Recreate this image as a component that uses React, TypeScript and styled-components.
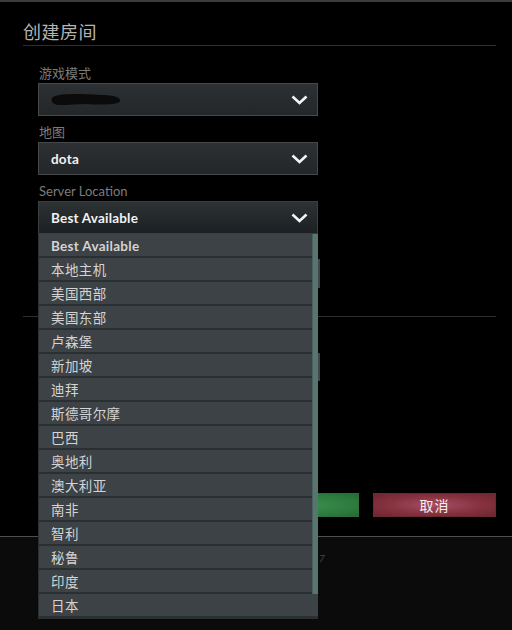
import React from "react";
import styled, { createGlobalStyle } from "styled-components";

const GlobalStyle = createGlobalStyle`
  html, body { margin: 0; padding: 0; background: #000; }
  body {
    font-family: Lato, "Noto Sans CJK SC", "Noto Sans", sans-serif;
    -webkit-font-smoothing: antialiased;
  }
  * { box-sizing: border-box; }
`;

const Page = styled.div`
  width: 512px;
  min-height: 630px;
  display: flex;
  flex-direction: column;
  background: #000;
  overflow: hidden;
`;

const TopBar = styled.div`
  height: 2px;
  background: #3c3c3c;
`;

const Panel = styled.div`
  padding: 18px 16px 19px 23px;
  display: flex;
  flex-direction: column;
`;

const Title = styled.h1`
  margin: 0;
  font-size: 18px;
  font-weight: 400;
  line-height: 25px;
  color: #b4b4b4;
  letter-spacing: 0.5px;
  border-bottom: 1px solid #2e2e2e;
`;

const Form = styled.div<{ $top: number }>`
  margin: ${(p) => p.$top}px 0 0 15px;
  width: 282px;
  display: flex;
  flex-direction: column;
`;

const Label = styled.div<{ $first?: boolean }>`
  margin-top: ${(p) => (p.$first ? 0 : 8)}px;
  height: 18px;
  line-height: 17px;
  font-size: 13px;
  color: #7c7c7c;
  padding-left: 1px;
`;

const SelectWrap = styled.div`
  position: relative;
  width: 280px;
`;

const SelectBox = styled.div<{ $open?: boolean }>`
  height: 33px;
  width: 280px;
  border: 1px solid ${(p) => (p.$open ? "#3a3f41" : "#45494b")};
  background: ${(p) =>
    p.$open
      ? "linear-gradient(#2d3234, #1c2022)"
      : "linear-gradient(#2c3032, #23272a)"};
  display: flex;
  align-items: center;
  justify-content: space-between;
  padding: 0 9px 0 12px;
  color: #f2f2f2;
  font-size: 13.5px;
  font-weight: 700;
  letter-spacing: 0.2px;
`;

const Chevron = () => (
  <svg width="17" height="10" viewBox="0 0 17 10">
    <polyline
      points="1.5,1.5 8.5,8 15.5,1.5"
      fill="none"
      stroke="#f4f4f4"
      strokeWidth="2.6"
      strokeLinejoin="miter"
    />
  </svg>
);

const Redaction = () => (
  <svg width="72" height="16" viewBox="0 0 72 16">
    <path
      d="M2 5 C 10 1, 30 2, 50 3 C 62 3, 70 5, 69 9 C 68 13, 50 13, 35 12 C 20 12, 6 15, 2 11 C 0 9, 0 7, 2 5 Z"
      fill="#0b0b0b"
    />
  </svg>
);

const Dropdown = styled.div`
  position: absolute;
  top: 100%;
  left: 0;
  width: 280px;
  z-index: 10;
  background: #3c4245;
  border-left: 1px solid #2b3033;
  border-bottom: 1px solid #2b3033;
  display: flex;
  flex-direction: column;
`;

const Option = styled.div<{ $latin?: boolean }>`
  height: 24px;
  line-height: 24px;
  padding-left: 12px;
  background: #3c4245;
  border-bottom: 2px solid #2a2f31;
  color: #d4d4d4;
  font-size: 13.5px;
  font-weight: ${(p) => (p.$latin ? 700 : 400)};
  letter-spacing: ${(p) => (p.$latin ? "0.3px" : "0.4px")};
  overflow: hidden;
`;

const ScrollThumb = styled.div`
  position: absolute;
  top: 0;
  right: 0;
  width: 6px;
  height: 360px;
  background: #587570;
  border-left: 1px solid #4a625e;
`;

const HiddenInput = styled.div<{ $top: number; $h: number }>`
  margin-top: ${(p) => p.$top}px;
  height: ${(p) => p.$h}px;
  width: 282px;
  border: 1px solid #3e4244;
  border-right: 2px solid #40474a;
  background: #1d2022;
`;

const Divider = styled.div`
  margin-top: 28px;
  height: 1px;
  background: #2e2e2e;
`;

const ButtonRow = styled.div`
  margin-top: 112px;
  display: flex;
  justify-content: flex-end;
  gap: 14px;
`;

const Button = styled.button<{ $variant: "ok" | "cancel" }>`
  width: 123px;
  height: 24px;
  border: 1px solid ${(p) => (p.$variant === "ok" ? "#2f6e3a" : "#6c2a30")};
  background: ${(p) =>
    p.$variant === "ok"
      ? "radial-gradient(ellipse at center, #3d9450 0%, #2b783b 75%, #25683a 100%)"
      : "radial-gradient(ellipse at center, #a84e68 0%, #86323f 55%, #6e2630 100%)"};
  color: #f4eef0;
  font-family: Lato, "Noto Sans CJK SC", sans-serif;
  font-size: 14px;
  letter-spacing: 1px;
  padding: 0;
`;

const Footer = styled.div`
  flex: 1;
  border-top: 1px solid #4e4e4e;
  background: #0b0b0b;
  padding: 9px 0 0 319px;
`;

const FooterText = styled.span`
  font-size: 10px;
  font-style: italic;
  color: #4a4a4a;
`;

const servers = [
  "Best Available",
  "本地主机",
  "美国西部",
  "美国东部",
  "卢森堡",
  "新加坡",
  "迪拜",
  "斯德哥尔摩",
  "巴西",
  "奥地利",
  "澳大利亚",
  "南非",
  "智利",
  "秘鲁",
  "印度",
  "日本",
];

export default function App() {
  return (
    <Page>
      <GlobalStyle />
      <TopBar />
      <Panel>
        <Title>创建房间</Title>
        <Form $top={19}>
          <Label $first>游戏模式</Label>
          <SelectWrap>
            <SelectBox>
              <Redaction />
              <Chevron />
            </SelectBox>
          </SelectWrap>
          <Label>地图</Label>
          <SelectWrap>
            <SelectBox>
              <span>dota</span>
              <Chevron />
            </SelectBox>
          </SelectWrap>
          <Label>Server Location</Label>
          <SelectWrap>
            <SelectBox $open>
              <span>Best Available</span>
              <Chevron />
            </SelectBox>
            <Dropdown>
              {servers.map((s, i) => (
                <Option key={s} $latin={i === 0}>
                  {s}
                </Option>
              ))}
              <ScrollThumb />
            </Dropdown>
          </SelectWrap>
          <HiddenInput $top={25} $h={29} />
        </Form>
        <Divider />
        <Form $top={36}>
          <HiddenInput $top={0} $h={28} />
        </Form>
        <ButtonRow>
          <Button $variant="ok">创建</Button>
          <Button $variant="cancel">取消</Button>
        </ButtonRow>
      </Panel>
      <Footer>
        <FooterText>7</FooterText>
      </Footer>
    </Page>
  );
}
